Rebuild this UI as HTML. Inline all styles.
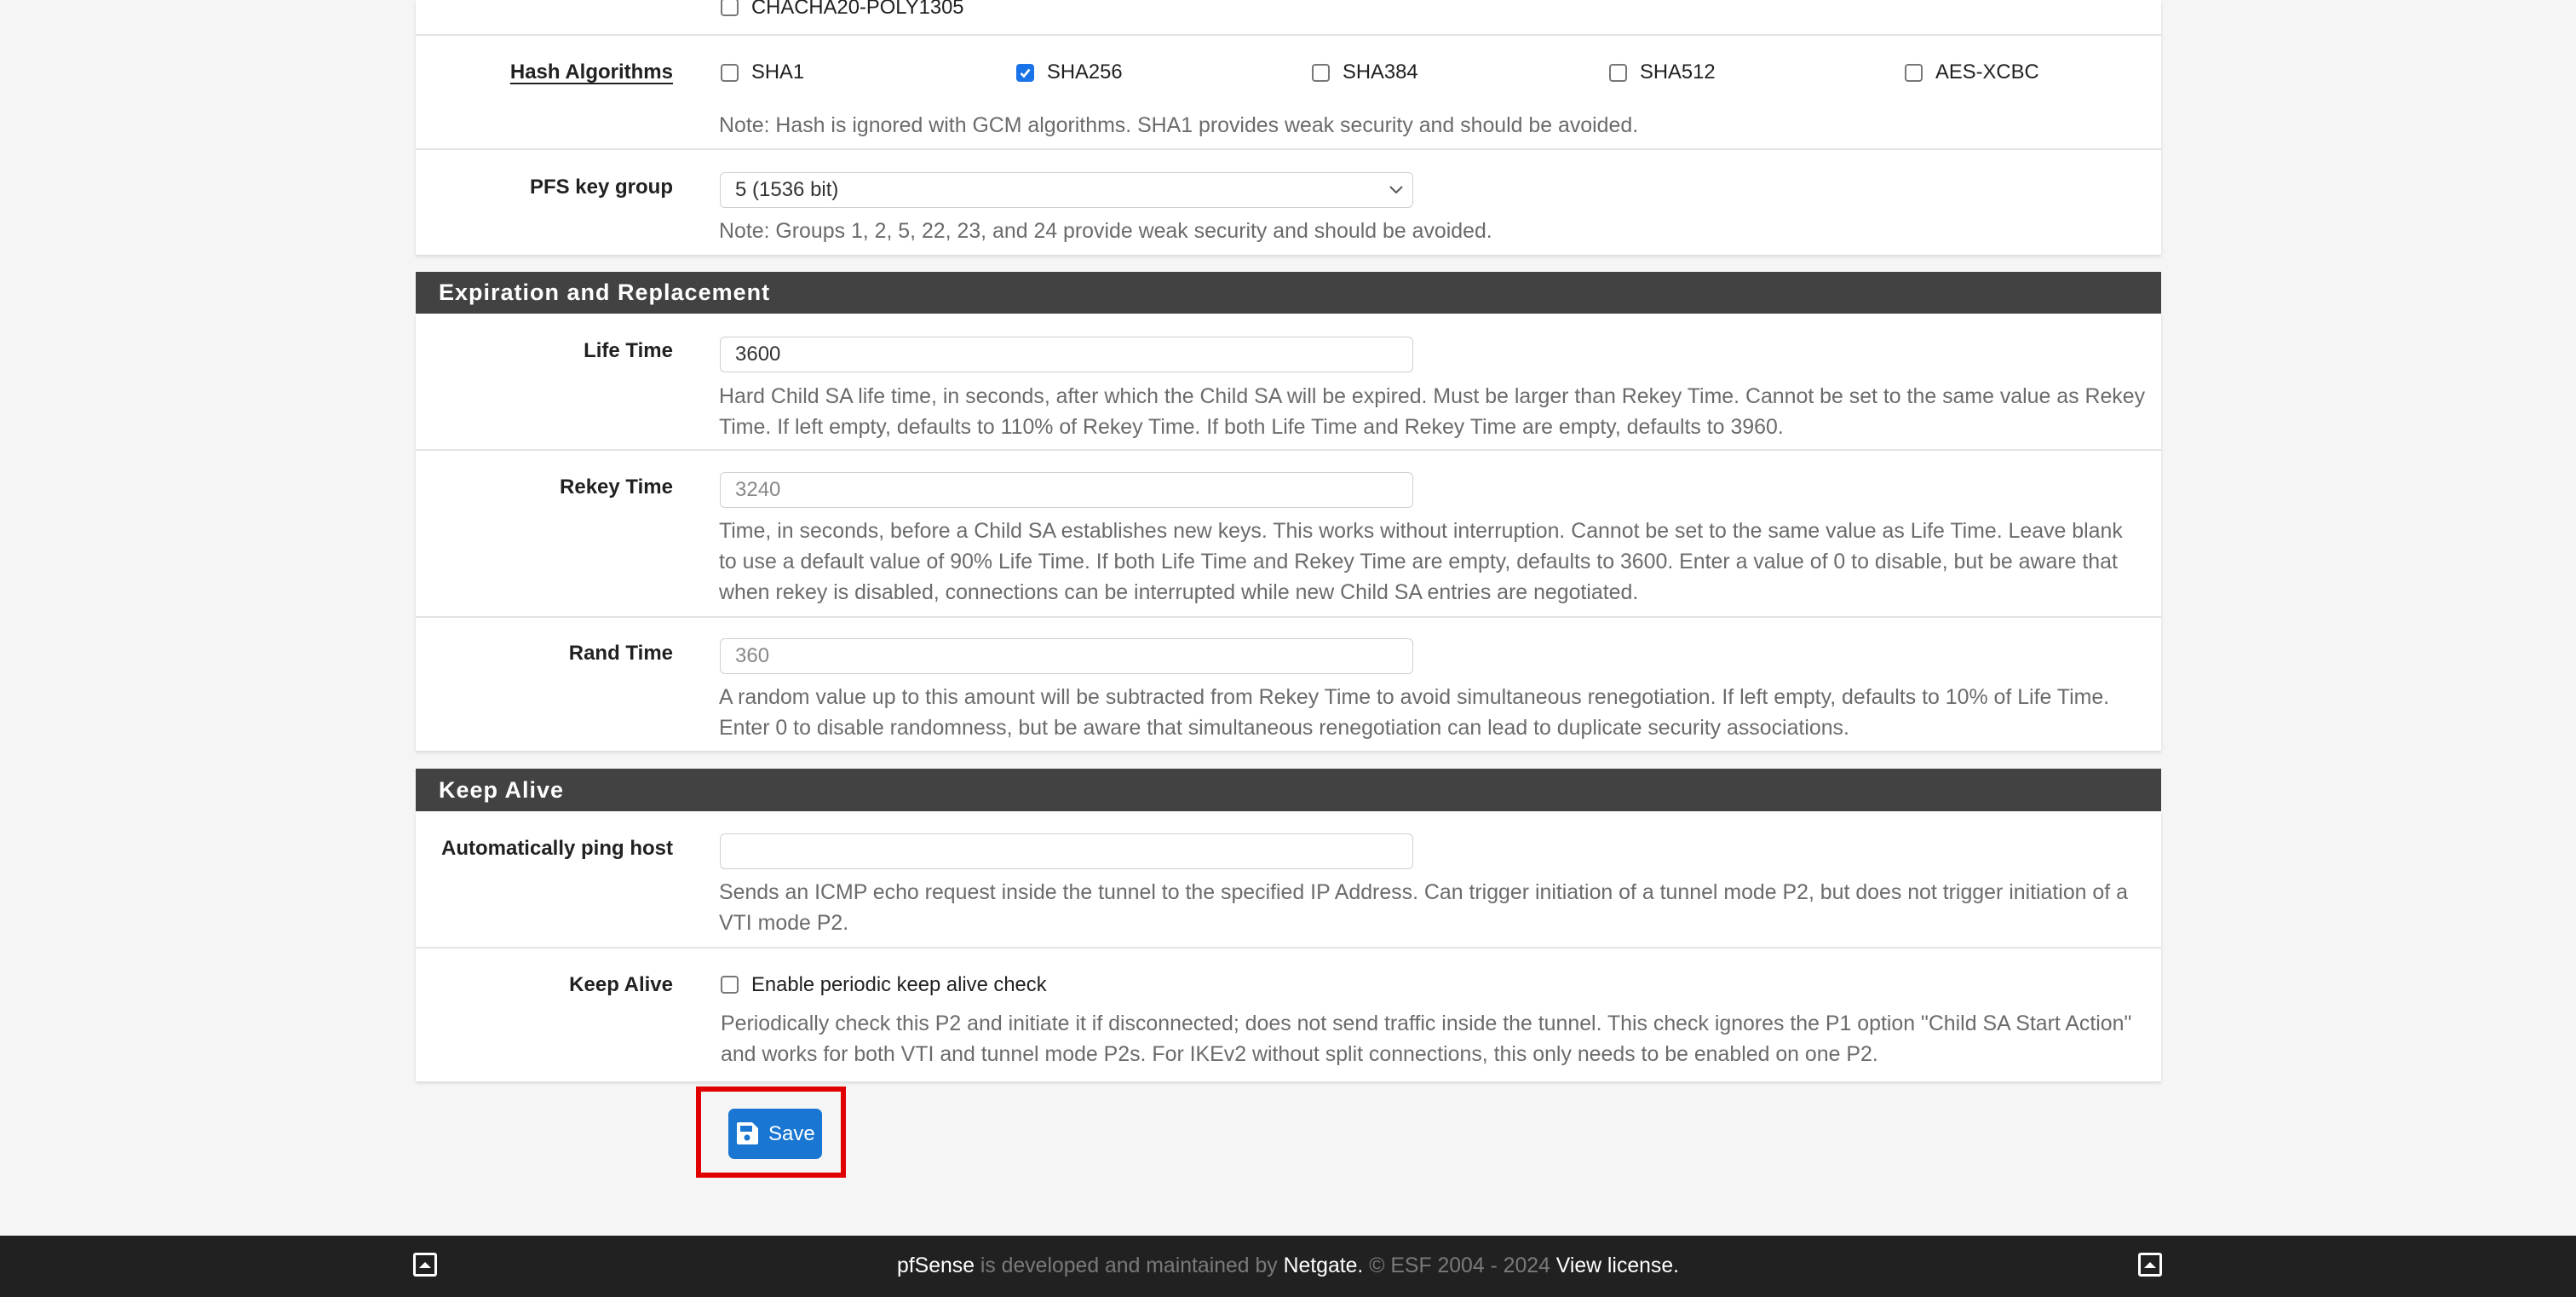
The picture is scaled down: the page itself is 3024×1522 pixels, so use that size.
<!DOCTYPE html>
<html><head><meta charset="utf-8"><style>
*{margin:0;padding:0;box-sizing:border-box}
body{width:3024px;height:1522px;background:#f5f5f5;position:relative;overflow:hidden;font-family:"Liberation Sans",sans-serif;font-size:24px;color:#212121}
.a{position:absolute;white-space:nowrap}
.panel{position:absolute;left:488px;width:2049px;background:#fff;box-shadow:0 2px 4px rgba(0,0,0,.12)}
.sep{position:absolute;left:488px;width:2049px;height:2px;background:#e3e3e3}
.hdr{position:absolute;left:488px;width:2049px;background:#424242;color:#fff;font-weight:bold;font-size:27px;letter-spacing:1px;padding-left:27px}
.lbl{position:absolute;right:2234px;font-weight:bold;font-size:24px;line-height:36px;white-space:nowrap;color:#212121}
.help{position:absolute;left:844px;color:#6b6b6b;font-size:24.9px;line-height:36px;white-space:nowrap}
.inp{position:absolute;left:845px;width:814px;height:42px;border:1.5px solid #cfcfcf;border-radius:6px;background:#fff;padding-left:17px;line-height:40px;font-size:24px;color:#333}
.cb{position:absolute;width:21px;height:21px;border:2px solid #777;border-radius:4px;background:#fff}
.ct{position:absolute;font-size:23.8px;line-height:36px;color:#212121;white-space:nowrap}
</style></head><body>

<div class="panel" style="top:0;height:299px"></div>
<div class="sep" style="top:40px"></div>
<div class="sep" style="top:174px"></div>

<div class="cb" style="left:846px;top:-2px"></div>
<div class="ct" style="left:882px;top:-9px">CHACHA20-POLY1305</div>

<div class="lbl" style="top:67px;text-decoration:underline;text-underline-offset:5px;text-decoration-thickness:2px">Hash Algorithms</div>
<div class="cb" style="left:846px;top:75px"></div><div class="ct" style="left:882px;top:67px">SHA1</div>
<div class="cb" style="left:1193px;top:75px;background:#1a73e8;border-color:#1a73e8"><svg width="17" height="17" viewBox="0 0 17 17" style="position:absolute;left:0;top:0"><path d="M3.5 9 L7 12.5 L13.5 4.5" stroke="#fff" stroke-width="2.6" fill="none"/></svg></div><div class="ct" style="left:1229px;top:67px">SHA256</div>
<div class="cb" style="left:1540px;top:75px"></div><div class="ct" style="left:1576px;top:67px">SHA384</div>
<div class="cb" style="left:1889px;top:75px"></div><div class="ct" style="left:1925px;top:67px">SHA512</div>
<div class="cb" style="left:2236px;top:75px"></div><div class="ct" style="left:2272px;top:67px">AES-XCBC</div>
<div class="help" style="top:129px">Note: Hash is ignored with GCM algorithms. SHA1 provides weak security and should be avoided.</div>

<div class="lbl" style="top:202px">PFS key group</div>
<div class="inp" style="top:202px">5 (1536 bit)<svg width="18" height="12" viewBox="0 0 18 12" style="position:absolute;right:10px;top:14px"><path d="M2 2 L9 9 L16 2" stroke="#555" stroke-width="2" fill="none"/></svg></div>
<div class="help" style="top:253px">Note: Groups 1, 2, 5, 22, 23, and 24 provide weak security and should be avoided.</div>

<div class="hdr" style="top:319px;height:49px;line-height:49px">Expiration and Replacement</div>
<div class="panel" style="top:368px;height:513px"></div>
<div class="sep" style="top:527px"></div>
<div class="sep" style="top:723px"></div>

<div class="lbl" style="top:394px">Life Time</div>
<div class="inp" style="top:395px">3600</div>
<div class="help" style="top:447px">Hard Child SA life time, in seconds, after which the Child SA will be expired. Must be larger than Rekey Time. Cannot be set to the same value as Rekey<br>Time. If left empty, defaults to 110% of Rekey Time. If both Life Time and Rekey Time are empty, defaults to 3960.</div>

<div class="lbl" style="top:554px">Rekey Time</div>
<div class="inp" style="top:554px;color:#888">3240</div>
<div class="help" style="top:605px">Time, in seconds, before a Child SA establishes new keys. This works without interruption. Cannot be set to the same value as Life Time. Leave blank<br>to use a default value of 90% Life Time. If both Life Time and Rekey Time are empty, defaults to 3600. Enter a value of 0 to disable, but be aware that<br>when rekey is disabled, connections can be interrupted while new Child SA entries are negotiated.</div>

<div class="lbl" style="top:749px">Rand Time</div>
<div class="inp" style="top:749px;color:#888">360</div>
<div class="help" style="top:800px">A random value up to this amount will be subtracted from Rekey Time to avoid simultaneous renegotiation. If left empty, defaults to 10% of Life Time.<br>Enter 0 to disable randomness, but be aware that simultaneous renegotiation can lead to duplicate security associations.</div>

<div class="hdr" style="top:902px;height:50px;line-height:50px">Keep Alive</div>
<div class="panel" style="top:952px;height:317px"></div>
<div class="sep" style="top:1111px"></div>

<div class="lbl" style="top:978px">Automatically ping host</div>
<div class="inp" style="top:978px"></div>
<div class="help" style="top:1029px">Sends an ICMP echo request inside the tunnel to the specified IP Address. Can trigger initiation of a tunnel mode P2, but does not trigger initiation of a<br>VTI mode P2.</div>

<div class="lbl" style="top:1138px">Keep Alive</div>
<div class="cb" style="left:846px;top:1145px"></div>
<div class="ct" style="left:882px;top:1138px">Enable periodic keep alive check</div>
<div class="help" style="top:1183px;left:846px">Periodically check this P2 and initiate it if disconnected; does not send traffic inside the tunnel. This check ignores the P1 option "Child SA Start Action"<br>and works for both VTI and tunnel mode P2s. For IKEv2 without split connections, this only needs to be enabled on one P2.</div>

<div class="a" style="left:817px;top:1275px;width:176px;height:107px;border:6px solid #e00000"></div>
<div class="a" style="left:855px;top:1301px;width:110px;height:59px;background:#1976d2;border-radius:7px;color:#fff;font-size:24px;line-height:59px;padding-left:47px">Save
<svg width="28" height="28" viewBox="0 0 28 28" style="position:absolute;left:8px;top:15px"><path d="M2 3 Q2 1 4 1 L20 1 L27 8 L27 25 Q27 27 25 27 L4 27 Q2 27 2 25 Z" fill="#fff"/><rect x="6" y="5" width="14" height="7" fill="#1976d2"/><circle cx="14" cy="19" r="3.5" fill="#1976d2"/></svg></div>

<div class="a" style="left:0;top:1450px;width:3024px;height:72px;background:#212121"></div>
<div class="a" style="left:485px;top:1470px;width:28px;height:28px;border:3px solid #fff;border-radius:3px"><svg width="22" height="22" viewBox="0 0 22 22" style="position:absolute;left:0;top:0"><path d="M4 15 L11 8 L18 15 Z" fill="#fff"/></svg></div>
<div class="a" style="left:2510px;top:1470px;width:28px;height:28px;border:3px solid #fff;border-radius:3px"><svg width="22" height="22" viewBox="0 0 22 22" style="position:absolute;left:0;top:0"><path d="M4 15 L11 8 L18 15 Z" fill="#fff"/></svg></div>
<div class="a" style="left:0;width:3024px;text-align:center;top:1468px;line-height:36px;font-size:24.8px;color:#7a7a7a"><span style="color:#fff">pfSense</span> is developed and maintained by <span style="color:#fff">Netgate.</span> © ESF 2004 - 2024 <span style="color:#fff">View license.</span></div>
</body></html>
